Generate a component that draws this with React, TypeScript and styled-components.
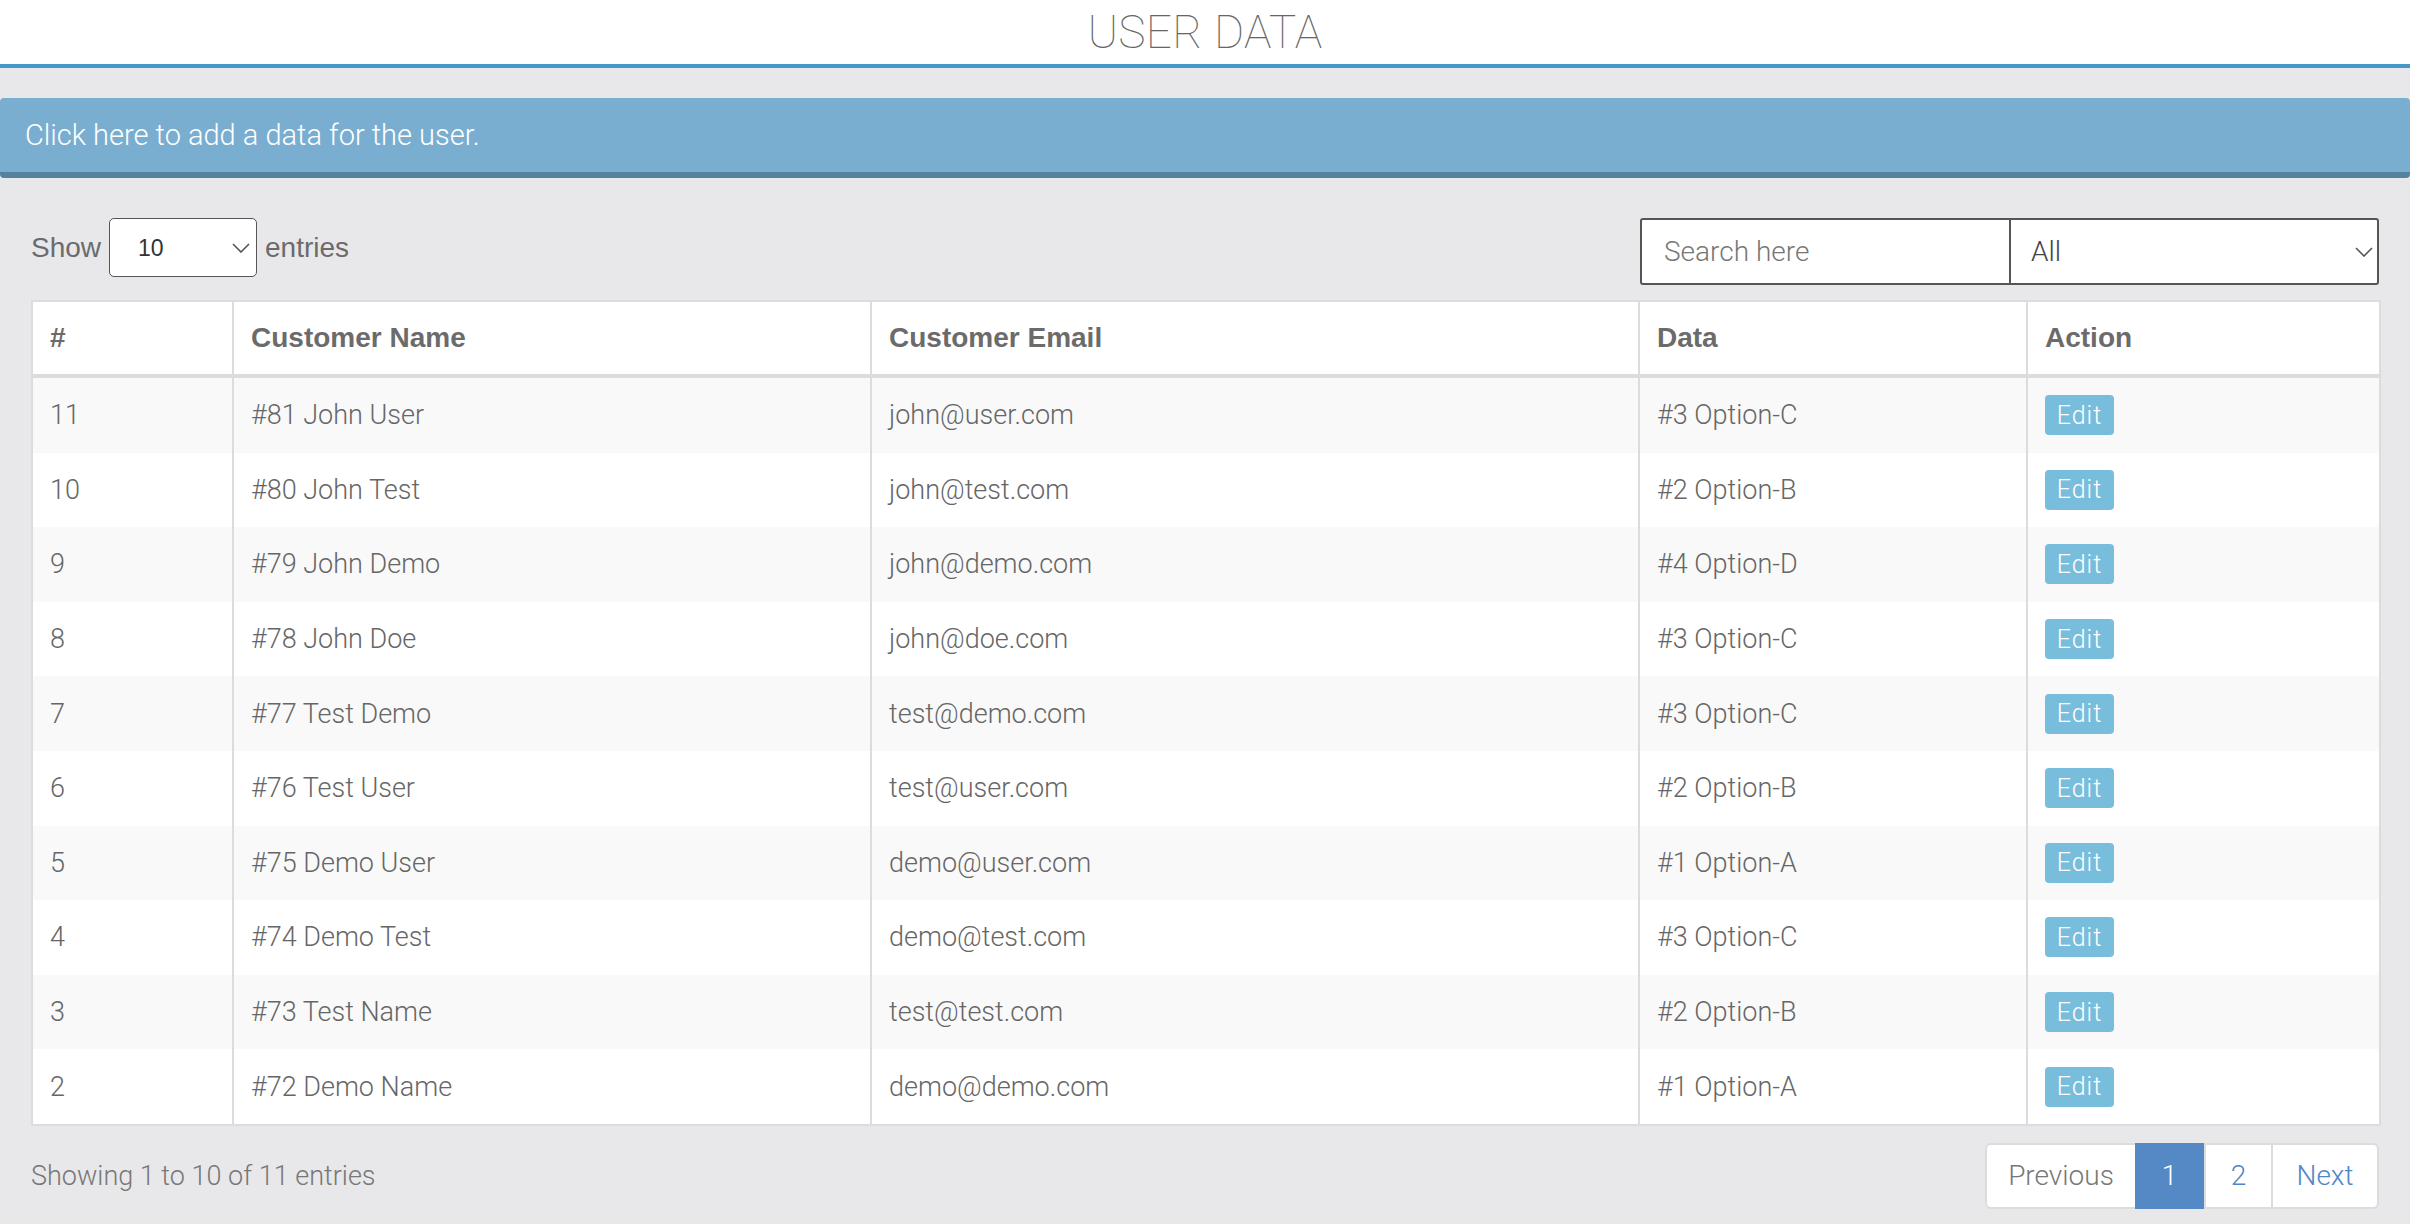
import React from 'react';
import styled, { createGlobalStyle } from 'styled-components';

const GlobalStyle = createGlobalStyle`
  body {
    margin: 0;
    background: #e8e8ea;
    font-family: 'Liberation Sans', Arial, sans-serif;
    color: #6b6b6b;
  }
`;

const Header = styled.header`
  height: 64px;
  background: #fff;
  border-bottom: 4px solid #4798c6;
  display: flex;
  align-items: center;
  justify-content: center;
`;

const Title = styled.h1`
  margin: 0;
  font-family: Roboto, sans-serif;
  font-weight: 100;
  font-size: 46px;
  color: #666;
  letter-spacing: 0.3px;
`;

const Banner = styled.div`
  margin-top: 30px;
  height: 74px;
  background: #79aed1;
  border-bottom: 6px solid #54829c;
  border-radius: 4px;
  display: flex;
  align-items: center;
  padding-left: 25px;
  font-family: Roboto, sans-serif;
  font-weight: 300;
  font-size: 29px;
  color: #fff;
  cursor: pointer;
`;

const Content = styled.main`
  padding: 40px 31px 0;
`;

const Toolbar = styled.div`
  display: flex;
  justify-content: space-between;
  align-items: flex-start;
`;

const LengthControl = styled.label`
  display: flex;
  align-items: center;
  gap: 8px;
  font-size: 28px;
  color: #6b6b6b;
`;

const chevron = (color: string) =>
  `url("data:image/svg+xml,%3Csvg xmlns='http://www.w3.org/2000/svg' width='18' height='10' viewBox='0 0 18 10'%3E%3Cpath d='M1 1l8 8 8-8' fill='none' stroke='${color}' stroke-width='1.6'/%3E%3C/svg%3E")`;

const SmallSelect = styled.select`
  appearance: none;
  width: 148px;
  height: 59px;
  border: 1.5px solid #555;
  border-radius: 5px;
  background: #fff ${chevron('%23555')} no-repeat right 6px center;
  padding: 0 0 0 28px;
  font-family: 'Liberation Sans', Arial, sans-serif;
  font-size: 23px;
  color: #333;
`;

const Filters = styled.div`
  display: flex;
`;

const SearchInput = styled.input`
  box-sizing: border-box;
  width: 370px;
  height: 67px;
  border: 2px solid #555;
  border-right-width: 1px;
  border-radius: 3px 0 0 3px;
  padding: 0 22px;
  font-family: Roboto, sans-serif;
  font-weight: 300;
  font-size: 28px;
  color: #555;
  &::placeholder {
    color: #777;
  }
`;

const FilterSelect = styled.select`
  appearance: none;
  box-sizing: border-box;
  width: 369px;
  height: 67px;
  border: 2px solid #555;
  border-left-width: 1px;
  border-radius: 0 3px 3px 0;
  background: #fff ${chevron('%23555')} no-repeat right 4px center;
  padding: 0 0 0 20px;
  font-family: Roboto, sans-serif;
  font-weight: 300;
  font-size: 28px;
  color: #444;
`;

const Table = styled.table`
  margin-top: 15px;
  width: 2348px;
  table-layout: fixed;
  border-collapse: collapse;
  border: 2px solid #dcdcdc;
  background: #fff;
`;

const HeadCell = styled.th`
  height: 72px;
  padding: 0 17px;
  text-align: left;
  font-family: 'Liberation Sans', Arial, sans-serif;
  font-weight: 700;
  font-size: 28px;
  color: #6b6b6b;
  border-left: 2px solid #dcdcdc;
  border-bottom: 4px solid #dcdcdc;
  &:first-child {
    border-left: none;
  }
`;

const Row = styled.tr<{ $striped: boolean }>`
  background: ${(p) => (p.$striped ? '#f9f9f9' : '#fff')};
`;

const Cell = styled.td`
  height: 74.6px;
  padding: 0 17px;
  font-family: Roboto, sans-serif;
  font-weight: 300;
  font-size: 27px;
  color: #666;
  border-left: 2px solid #dcdcdc;
  white-space: nowrap;
  &:first-child {
    border-left: none;
  }
`;

const EditButton = styled.button`
  width: 69px;
  height: 40px;
  border: none;
  border-radius: 4px;
  background: #78bedc;
  color: #fff;
  font-family: Roboto, sans-serif;
  font-weight: 300;
  font-size: 25px;
  letter-spacing: 1px;
  padding: 0;
  cursor: pointer;
`;

const Footer = styled.div`
  display: flex;
  justify-content: space-between;
  align-items: center;
  margin-top: 17px;
`;

const Info = styled.div`
  font-family: Roboto, sans-serif;
  font-weight: 300;
  font-size: 27px;
  color: #777;
`;

const Pager = styled.nav`
  display: flex;
  height: 62px;
  border: 2px solid #dcdcdc;
  border-radius: 6px;
  background: #fff;
`;

const PageLink = styled.a<{ $active?: boolean; $muted?: boolean; $w: number }>`
  display: flex;
  align-items: center;
  justify-content: center;
  width: ${(p) => p.$w}px;
  margin: ${(p) => (p.$active ? '-2px 0' : '0')};
  border-left: ${(p) => (p.$active ? 'none' : '2px solid #dcdcdc')};
  background: ${(p) => (p.$active ? '#5589c5' : 'transparent')};
  color: ${(p) => (p.$active ? '#fff' : p.$muted ? '#777' : '#4f86c6')};
  font-family: Roboto, sans-serif;
  font-weight: 300;
  font-size: 28px;
  cursor: pointer;
  &:first-child {
    border-left: none;
  }
`;

const columns = [
  { label: '#', width: 201 },
  { label: 'Customer Name', width: 638 },
  { label: 'Customer Email', width: 768 },
  { label: 'Data', width: 388 },
  { label: 'Action', width: 353 },
];

const rows = [
  [11, '#81 John User', 'john@user.com', '#3 Option-C'],
  [10, '#80 John Test', 'john@test.com', '#2 Option-B'],
  [9, '#79 John Demo', 'john@demo.com', '#4 Option-D'],
  [8, '#78 John Doe', 'john@doe.com', '#3 Option-C'],
  [7, '#77 Test Demo', 'test@demo.com', '#3 Option-C'],
  [6, '#76 Test User', 'test@user.com', '#2 Option-B'],
  [5, '#75 Demo User', 'demo@user.com', '#1 Option-A'],
  [4, '#74 Demo Test', 'demo@test.com', '#3 Option-C'],
  [3, '#73 Test Name', 'test@test.com', '#2 Option-B'],
  [2, '#72 Demo Name', 'demo@demo.com', '#1 Option-A'],
];

export default function App() {
  return (
    <>
      <GlobalStyle />
      <Header>
        <Title>USER DATA</Title>
      </Header>
      <Banner>Click here to add a data for the user.</Banner>
      <Content>
        <Toolbar>
          <LengthControl>
            Show
            <SmallSelect defaultValue="10">
              <option>10</option>
              <option>25</option>
              <option>50</option>
            </SmallSelect>
            entries
          </LengthControl>
          <Filters>
            <SearchInput placeholder="Search here" />
            <FilterSelect defaultValue="All">
              <option>All</option>
              <option>Option-A</option>
              <option>Option-B</option>
              <option>Option-C</option>
              <option>Option-D</option>
            </FilterSelect>
          </Filters>
        </Toolbar>
        <Table>
          <colgroup>
            {columns.map((c) => (
              <col key={c.label} style={{ width: c.width }} />
            ))}
          </colgroup>
          <thead>
            <tr>
              {columns.map((c) => (
                <HeadCell key={c.label}>{c.label}</HeadCell>
              ))}
            </tr>
          </thead>
          <tbody>
            {rows.map((r, i) => (
              <Row key={r[0]} $striped={i % 2 === 0}>
                <Cell>{r[0]}</Cell>
                <Cell>{r[1]}</Cell>
                <Cell>{r[2]}</Cell>
                <Cell>{r[3]}</Cell>
                <Cell>
                  <EditButton>Edit</EditButton>
                </Cell>
              </Row>
            ))}
          </tbody>
        </Table>
        <Footer>
          <Info>Showing 1 to 10 of 11 entries</Info>
          <Pager>
            <PageLink $muted $w={148}>Previous</PageLink>
            <PageLink $active $w={69}>1</PageLink>
            <PageLink $w={65}>2</PageLink>
            <PageLink $w={104}>Next</PageLink>
          </Pager>
        </Footer>
      </Content>
    </>
  );
}
